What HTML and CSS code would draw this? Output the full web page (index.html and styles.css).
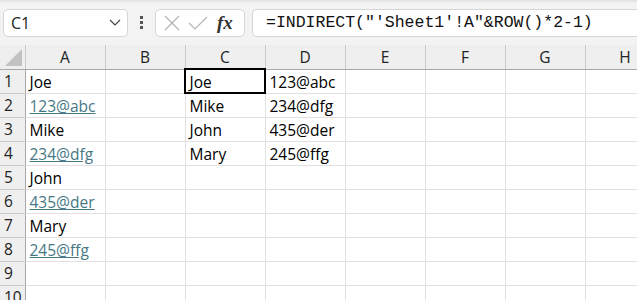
FILE: index.html
```html
<!DOCTYPE html>
<html lang="en">
<head>
    <meta charset="UTF-8">
    <meta name="viewport" content="width=device-width, initial-scale=1.0">
    <title>Book1 - Excel</title>
    <link rel="stylesheet" href="styles.css">
</head>
<body>
    <div class="formula-bar">
        <div class="name-box">
            <span>C1</span>
            <svg width="12" height="7" viewBox="0 0 12 7"><path d="M1 1 L6 6 L11 1" fill="none" stroke="#444" stroke-width="1.2"/></svg>
        </div>
        <div class="grip">
            <span></span><span></span><span></span>
        </div>
        <div class="fx-box">
            <svg width="16" height="16" viewBox="0 0 16 16"><path d="M1 1 L15 15 M15 1 L1 15" stroke="#b4b4b4" stroke-width="1.2" fill="none"/></svg>
            <svg width="20" height="16" viewBox="0 0 20 16"><path d="M1 8 L7 14 L19 2" stroke="#b4b4b4" stroke-width="1.2" fill="none"/></svg>
            <span class="fx">fx</span>
        </div>
        <div class="formula">=INDIRECT("'Sheet1'!A"&amp;ROW()*2-1)</div>
    </div>

    <table class="sheet">
        <colgroup>
            <col class="col-head">
            <col><col><col><col><col><col><col><col>
        </colgroup>
        <thead>
            <tr>
                <th class="corner"><div class="triangle"></div></th>
                <th>A</th><th>B</th><th>C</th><th>D</th><th>E</th><th>F</th><th>G</th><th>H</th>
            </tr>
        </thead>
        <tbody>
            <tr><th>1</th><td>Joe</td><td></td><td class="active">Joe</td><td>123@abc</td><td></td><td></td><td></td><td></td></tr>
            <tr><th>2</th><td><a href="#">123@abc</a></td><td></td><td>Mike</td><td>234@dfg</td><td></td><td></td><td></td><td></td></tr>
            <tr><th>3</th><td>Mike</td><td></td><td>John</td><td>435@der</td><td></td><td></td><td></td><td></td></tr>
            <tr><th>4</th><td><a href="#">234@dfg</a></td><td></td><td>Mary</td><td>245@ffg</td><td></td><td></td><td></td><td></td></tr>
            <tr><th>5</th><td>John</td><td></td><td></td><td></td><td></td><td></td><td></td><td></td></tr>
            <tr><th>6</th><td><a href="#">435@der</a></td><td></td><td></td><td></td><td></td><td></td><td></td><td></td></tr>
            <tr><th>7</th><td>Mary</td><td></td><td></td><td></td><td></td><td></td><td></td><td></td></tr>
            <tr><th>8</th><td><a href="#">245@ffg</a></td><td></td><td></td><td></td><td></td><td></td><td></td><td></td></tr>
            <tr><th>9</th><td></td><td></td><td></td><td></td><td></td><td></td><td></td><td></td></tr>
            <tr><th>10</th><td></td><td></td><td></td><td></td><td></td><td></td><td></td><td></td></tr>
        </tbody>
    </table>
</body>
</html>
```

FILE: styles.css
```css
:root {
    --bar-bg: #f3f3f3;
    --head-bg: #efefef;
    --grid: #e1e1e1;
    --head-line: #c9c9c9;
    --link: #467886;
    --font-family: 'Open Sans', Lato, sans-serif;
}
body {
    margin: 0;
    width: 637px;
    height: 300px;
    overflow: hidden;
    background: #fff;
    font-family: var(--font-family);
    color: #000;
}
.formula-bar {
    display: flex;
    align-items: center;
    height: 45px;
    padding: 0 0 0 3px;
    background: var(--bar-bg);
    box-shadow: inset 0 3px 3px -2px #d8d8d8;
    box-sizing: border-box;
}
.name-box, .fx-box, .formula {
    height: 28px;
    background: #fff;
    border: 1px solid #d6d6d6;
    border-radius: 5px;
    box-sizing: border-box;
    display: flex;
    align-items: center;
}
.name-box {
    width: 125px;
    padding: 0 6px 0 7px;
    justify-content: space-between;
    font-size: 16px;
    color: #222;
}
.grip {
    display: flex;
    flex-direction: column;
    gap: 2px;
    width: 27px;
    align-items: center;
}
.grip span {
    width: 3px;
    height: 3px;
    background: #555;
}
.fx-box {
    width: 90px;
    padding: 0 6px 0 8px;
    gap: 8px;
}
.fx {
    font-family: 'Liberation Serif', serif;
    font-style: italic;
    font-weight: bold;
    font-size: 19px;
    color: #333;
    margin-left: 1px;
}
.formula {
    flex: 1;
    margin-left: 7px;
    padding-left: 13px;
    border-right: none;
    border-radius: 5px 0 0 5px;
    font-family: 'Liberation Mono', monospace;
    font-size: 16.5px;
    color: #111;
    white-space: nowrap;
}
.sheet {
    border-collapse: collapse;
    table-layout: fixed;
    width: 665px;
    font-size: 15.5px;
}
.sheet col {
    width: 80px;
}
.sheet col.col-head {
    width: 25px;
}
.sheet th, .sheet td {
    height: 24px;
    padding: 0;
    box-sizing: border-box;
    border-right: 1px solid var(--grid);
    border-bottom: 1px solid var(--grid);
    white-space: nowrap;
    overflow: visible;
    line-height: 20px;
}
.sheet thead th {
    background: var(--head-bg);
    font-weight: normal;
    color: #222;
    text-align: center;
    border-right: 1px solid var(--head-line);
    border-bottom: 1px solid #a8a8a8;
}
.sheet tbody th {
    background: var(--head-bg);
    font-weight: normal;
    color: #222;
    text-align: left;
    padding-left: 4px;
    border-right: 1px solid #a8a8a8;
    border-bottom: 1px solid var(--head-line);
}
.sheet td {
    padding-left: 4px;
    padding-top: 2px;
}
.sheet .corner {
    position: relative;
}
.triangle {
    position: absolute;
    right: 3px;
    bottom: 3px;
    width: 0;
    height: 0;
    border-left: 17px solid transparent;
    border-bottom: 17px solid #c2c2c2;
}
.sheet td.active {
    outline: 2px solid #000;
    outline-offset: -1px;
}
.sheet a {
    color: var(--link);
    text-decoration: underline;
}
```
